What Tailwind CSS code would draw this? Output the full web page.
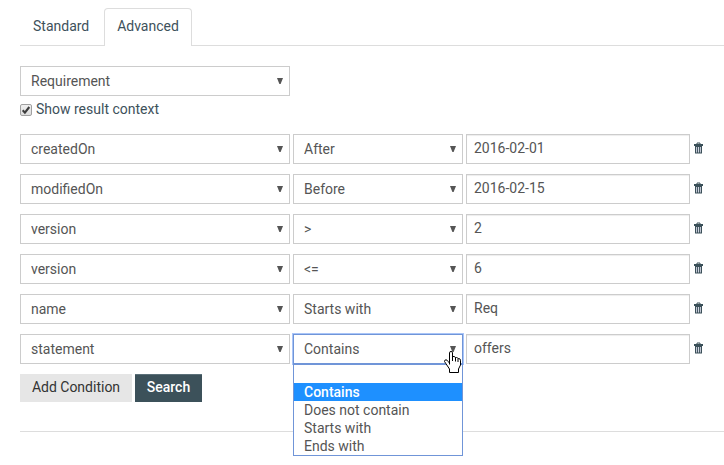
<!DOCTYPE html>
<html lang="en">
<head>
  <meta charset="UTF-8" />
  <meta name="viewport" content="width=device-width, initial-scale=1" />
  <title>Advanced Search</title>
  <script src="https://cdn.jsdelivr.net/npm/@tailwindcss/browser@4"></script>
</head>
<body class="min-h-screen bg-white font-['Roboto',sans-serif] text-sm text-[#555555]">

  <!-- Shared icons -->
  <svg class="hidden">
    <symbol id="trash" viewBox="0 0 11 12">
      <path d="M4 2V1h3v1" fill="none" stroke="#3b5059" />
      <path d="M1 2h9v2H1z" fill="#3b5059" />
      <path d="M2 4h7v7.5H2z" fill="#3b5059" />
      <path d="M3.6 5v5.5M5.5 5v5.5M7.4 5v5.5" stroke="#e3e3f0" stroke-width=".9" />
    </symbol>
    <symbol id="arrow" viewBox="0 0 6 6">
      <path d="M0 0h6L3.6 6H2.4z" fill="#555555" />
    </symbol>
  </svg>

  <div class="pl-5 pt-2">

    <!-- Tabs -->
    <nav class="flex border-b border-[#dddddd] text-[#3e515b]">
      <a href="#standard" class="w-21 pt-2 pb-[9px] pl-[13px] leading-5">Standard</a>
      <a href="#advanced" class="-mb-px w-22 rounded-t border border-b-0 border-[#dddddd] bg-white pt-[7px] pb-[10px] text-center leading-5">Advanced</a>
    </nav>

    <form class="pt-5">

      <!-- Type -->
      <div class="grid grid-cols-[270fr_170fr_224fr_31px] gap-[3px]">
        <div class="relative">
          <select aria-label="Type" class="block h-[30px] w-full appearance-none border border-[#cccccc] bg-white pl-[10px]"><option>Requirement</option></select>
          <svg class="pointer-events-none absolute top-3 right-[7px] size-[6px]"><use href="#arrow" /></svg>
        </div>
      </div>
      <label class="mt-[3px] flex h-5 items-center text-[#3e515b]">
        <span class="relative mt-px mr-1 size-3">
          <input type="checkbox" checked class="block size-3 appearance-none rounded-xs border border-[#a0a0a0] bg-linear-to-b from-[#f0f0f0] to-[#dddddd]" />
          <svg class="pointer-events-none absolute inset-0 size-3" viewBox="0 0 12 12"><path d="M2.7 6.2l2.2 2.4L9.3 3" fill="none" stroke="#3c3c3c" stroke-width="2.1" /></svg>
        </span>
        Show result context
      </label>

      <!-- Conditions -->
      <div class="mt-[15px] grid grid-cols-[270fr_170fr_224fr_31px] gap-x-[3px] gap-y-[10px]">
        <div class="relative">
          <select aria-label="Field 1" class="block h-[30px] w-full appearance-none border border-[#cccccc] bg-white pl-[10px]"><option>createdOn</option></select>
          <svg class="pointer-events-none absolute top-3 right-[7px] size-[6px]"><use href="#arrow" /></svg>
        </div>
        <div class="relative">
          <select aria-label="Operator 1" class="block h-[30px] w-full appearance-none border border-[#cccccc] bg-white pl-[10px]"><option>After</option></select>
          <svg class="pointer-events-none absolute top-3 right-[7px] size-[6px]"><use href="#arrow" /></svg>
        </div>
        <input type="text" aria-label="Value 1" value="2016-02-01" class="h-[30px] w-full border border-[#cccccc] px-[7px] pb-[2px] inset-shadow-[0_1px_1px_#00000013]" />
        <button type="button" aria-label="Remove condition 1" class="h-[28px]"><svg class="h-3 w-[11px]"><use href="#trash" /></svg></button>

        <div class="relative">
          <select aria-label="Field 2" class="block h-[30px] w-full appearance-none border border-[#cccccc] bg-white pl-[10px]"><option>modifiedOn</option></select>
          <svg class="pointer-events-none absolute top-3 right-[7px] size-[6px]"><use href="#arrow" /></svg>
        </div>
        <div class="relative">
          <select aria-label="Operator 2" class="block h-[30px] w-full appearance-none border border-[#cccccc] bg-white pl-[10px]"><option>Before</option></select>
          <svg class="pointer-events-none absolute top-3 right-[7px] size-[6px]"><use href="#arrow" /></svg>
        </div>
        <input type="text" aria-label="Value 2" value="2016-02-15" class="h-[30px] w-full border border-[#cccccc] px-[7px] pb-[2px] inset-shadow-[0_1px_1px_#00000013]" />
        <button type="button" aria-label="Remove condition 2" class="h-[28px]"><svg class="h-3 w-[11px]"><use href="#trash" /></svg></button>

        <div class="relative">
          <select aria-label="Field 3" class="block h-[30px] w-full appearance-none border border-[#cccccc] bg-white pl-[10px]"><option>version</option></select>
          <svg class="pointer-events-none absolute top-3 right-[7px] size-[6px]"><use href="#arrow" /></svg>
        </div>
        <div class="relative">
          <select aria-label="Operator 3" class="block h-[30px] w-full appearance-none border border-[#cccccc] bg-white pl-[10px]"><option>&gt;</option></select>
          <svg class="pointer-events-none absolute top-3 right-[7px] size-[6px]"><use href="#arrow" /></svg>
        </div>
        <input type="text" aria-label="Value 3" value="2" class="h-[30px] w-full border border-[#cccccc] px-[7px] pb-[2px] inset-shadow-[0_1px_1px_#00000013]" />
        <button type="button" aria-label="Remove condition 3" class="h-[28px]"><svg class="h-3 w-[11px]"><use href="#trash" /></svg></button>

        <div class="relative">
          <select aria-label="Field 4" class="block h-[30px] w-full appearance-none border border-[#cccccc] bg-white pl-[10px]"><option>version</option></select>
          <svg class="pointer-events-none absolute top-3 right-[7px] size-[6px]"><use href="#arrow" /></svg>
        </div>
        <div class="relative">
          <select aria-label="Operator 4" class="block h-[30px] w-full appearance-none border border-[#cccccc] bg-white pl-[10px]"><option>&lt;=</option></select>
          <svg class="pointer-events-none absolute top-3 right-[7px] size-[6px]"><use href="#arrow" /></svg>
        </div>
        <input type="text" aria-label="Value 4" value="6" class="h-[30px] w-full border border-[#cccccc] px-[7px] pb-[2px] inset-shadow-[0_1px_1px_#00000013]" />
        <button type="button" aria-label="Remove condition 4" class="h-[28px]"><svg class="h-3 w-[11px]"><use href="#trash" /></svg></button>

        <div class="relative">
          <select aria-label="Field 5" class="block h-[30px] w-full appearance-none border border-[#cccccc] bg-white pl-[10px]"><option>name</option></select>
          <svg class="pointer-events-none absolute top-3 right-[7px] size-[6px]"><use href="#arrow" /></svg>
        </div>
        <div class="relative">
          <select aria-label="Operator 5" class="block h-[30px] w-full appearance-none border border-[#cccccc] bg-white pl-[10px]"><option>Starts with</option></select>
          <svg class="pointer-events-none absolute top-3 right-[7px] size-[6px]"><use href="#arrow" /></svg>
        </div>
        <input type="text" aria-label="Value 5" value="Req" class="h-[30px] w-full border border-[#cccccc] px-[7px] pb-[2px] inset-shadow-[0_1px_1px_#00000013]" />
        <button type="button" aria-label="Remove condition 5" class="h-[28px]"><svg class="h-3 w-[11px]"><use href="#trash" /></svg></button>

        <div class="relative">
          <select aria-label="Field 6" class="block h-[30px] w-full appearance-none border border-[#cccccc] bg-white pl-[10px]"><option>statement</option></select>
          <svg class="pointer-events-none absolute top-3 right-[7px] size-[6px]"><use href="#arrow" /></svg>
        </div>
        <div class="relative">
          <select aria-label="Operator 6" class="block h-[30px] w-full appearance-none border border-[#7095d8] bg-white pl-[10px] shadow-[0_0_0_1px_#a9c5f8]"><option>Contains</option></select>
          <svg class="pointer-events-none absolute top-3 right-[7px] size-[6px]"><use href="#arrow" /></svg>

          <!-- Open option list -->
          <ul role="listbox" aria-label="Operators" class="absolute top-[30px] left-0 z-10 w-full border border-[#7095d8] bg-white leading-[18px]">
            <li role="option" class="h-[18px]"></li>
            <li role="option" aria-selected="true" class="bg-[#1e90ff] pl-[10px] font-medium text-white">Contains</li>
            <li role="option" class="pl-[10px]">Does not contain</li>
            <li role="option" class="pl-[10px]">Starts with</li>
            <li role="option" class="pl-[10px]">Ends with</li>
          </ul>

          <!-- Pointer -->
          <svg class="pointer-events-none absolute top-[17px] right-[2px] z-20 h-[22px] w-[17px]" viewBox="0 0 17 22">
            <path d="M5.5 13.5V1.8Q5.5.5 7 .5t1.5 1.3V5.500h1.500q1 0 1.300 1h1.200q1.200 0 1.500 1h.5q1.900 0 2 1.700V14l-2 4v3.500h-9V18L1.800 12.500.5 10.500q0-1.700 1.500-1.700 1 0 2 1.500l1.500 1.800" fill="#ffffff" stroke="#000000" />
            <path d="M8.500 5v5M11.500 6.500V10.500M14 7.500v3.500" fill="none" stroke="#000000" />
          </svg>
        </div>
        <input type="text" aria-label="Value 6" value="offers" class="h-[30px] w-full border border-[#cccccc] px-[7px] pb-[2px] inset-shadow-[0_1px_1px_#00000013]" />
        <button type="button" aria-label="Remove condition 6" class="h-[28px]"><svg class="h-3 w-[11px]"><use href="#trash" /></svg></button>
      </div>

      <!-- Actions -->
      <div class="mt-[10px] flex gap-[3px]">
        <button type="button" class="h-7 w-28 bg-[#e6e6e6] pb-[2px] text-[#333333]">Add Condition</button>
        <button type="submit" class="h-7 w-[67px] border-t border-[#5b7079] bg-[#3c515a] pb-[3px] font-medium text-white">Search</button>
      </div>
    </form>

    <hr class="mt-[29px] border-[#dddddd]" />
  </div>

</body>
</html>
